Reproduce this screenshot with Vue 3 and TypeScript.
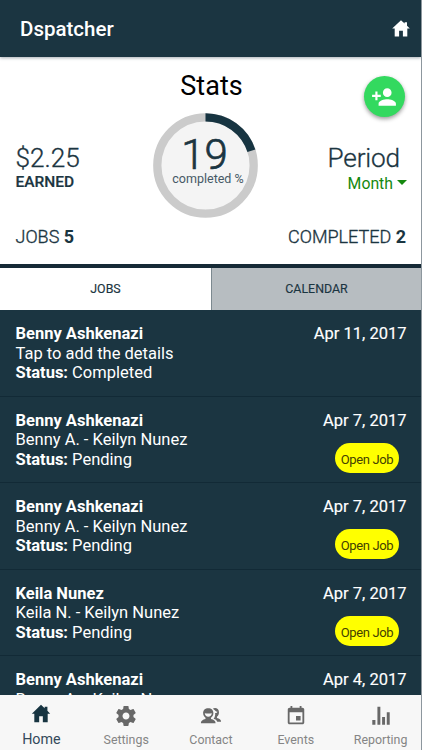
<script setup lang="ts">
interface Job {
  id: number
  name: string
  detail: string
  status: string
  date: string
  open: boolean
}

interface NavItem {
  label: string
  icon: string
  active?: boolean
}

const jobs: Job[] = [
  { id: 1, name: 'Benny Ashkenazi', detail: 'Tap to add the details', status: 'Completed', date: 'Apr 11, 2017', open: false },
  { id: 2, name: 'Benny Ashkenazi', detail: 'Benny A. - Keilyn Nunez', status: 'Pending', date: 'Apr 7, 2017', open: true },
  { id: 3, name: 'Benny Ashkenazi', detail: 'Benny A. - Keilyn Nunez', status: 'Pending', date: 'Apr 7, 2017', open: true },
  { id: 4, name: 'Keila Nunez', detail: 'Keila N. - Keilyn Nunez', status: 'Pending', date: 'Apr 7, 2017', open: true },
  { id: 5, name: 'Benny Ashkenazi', detail: 'Benny A. - Keilyn Nunez', status: 'Pending', date: 'Apr 4, 2017', open: false },
]

const nav: NavItem[] = [
  { label: 'Home', icon: 'home', active: true },
  { label: 'Settings', icon: 'gear' },
  { label: 'Contact', icon: 'people' },
  { label: 'Events', icon: 'calendar' },
  { label: 'Reporting', icon: 'chart' },
]

const percent = 19
const radius = 48.2
const circumference = 2 * Math.PI * radius
const dash = `${(circumference * 20) / 100} ${circumference}`
</script>

<template>
  <div class="screen">
    <header class="topbar">
      <h1>Dspatcher</h1>
      <svg class="top-home" viewBox="0 0 18 17"><path d="M9 0.3 L12.6 3.5 V2.3 H15 V5.7 L17.8 8.4 H15.3 V16.5 H10.9 V10.8 H7.1 V16.5 H2.7 V8.4 H0.2 Z" /></svg>
    </header>

    <section class="stats">
      <div class="side">
        <div class="amount">$2.25</div>
        <div class="earned">EARNED</div>
        <div class="count">JOBS <b>5</b></div>
      </div>
      <div class="middle">
        <h2>Stats</h2>
        <div class="gauge">
          <svg viewBox="0 0 105 105">
            <circle class="track" cx="52.5" cy="52.5" :r="radius" />
            <circle class="arc" cx="52.5" cy="52.5" :r="radius" :stroke-dasharray="dash" transform="rotate(-90 52.5 52.5)" />
          </svg>
          <div class="gauge-text">
            <div class="percent">{{ percent }}</div>
            <div class="caption">completed %</div>
          </div>
        </div>
      </div>
      <div class="side right">
        <button class="add" aria-label="Add contact">
          <svg viewBox="0 0 24 24"><path d="M15 12c2.21 0 4-1.79 4-4s-1.79-4-4-4-4 1.790-4 4 1.790 4 4 4zm-9-2V7H4v3H1v2h3v3h2v-3h3v-2H6zm9 4c-2.670 0-8 1.340-8 4v2h16v-2c0-2.660-5.330-4-8-4z" /></svg>
        </button>
        <div class="period">Period</div>
        <div class="month">Month<i class="caret"></i></div>
        <div class="count">COMPLETED <b>2</b></div>
      </div>
    </section>

    <nav class="tabs">
      <div class="tab selected">JOBS</div>
      <div class="tab">CALENDAR</div>
    </nav>

    <main class="list">
      <article v-for="job in jobs" :key="job.id" class="job">
        <div class="info">
          <div class="name">{{ job.name }}</div>
          <div class="detail">{{ job.detail }}</div>
          <div class="status"><b>Status:</b> {{ job.status }}</div>
        </div>
        <div class="meta">
          <div class="date">{{ job.date }}</div>
          <button v-if="job.open" class="open">Open Job</button>
        </div>
      </article>
    </main>

    <footer class="bottom">
      <div v-for="item in nav" :key="item.label" class="item" :class="{ active: item.active }">
        <svg v-if="item.icon === 'home'" viewBox="0 0 24 24"><path d="M12 2 L16 5.700 V4.200 H19 V8.500 L22 11.800 H19.300 V21 H14 V14.500 H10 V21 H4.700 V11.800 H2 Z" /></svg>
        <svg v-else-if="item.icon === 'gear'" viewBox="1 1 22 22"><path d="M19.430 12.980c.040-.320.070-.640.070-.980s-.030-.660-.070-.980l2.110-1.650c.190-.150.240-.420.120-.640l-2-3.460c-.120-.220-.390-.300-.610-.220l-2.490 1c-.520-.400-1.080-.730-1.690-.980l-.380-2.650C14.460 2.180 14.250 2 14 2h-4c-.250 0-.460.180-.490.420l-.380 2.650c-.610.250-1.170.590-1.690.980l-2.490-1c-.230-.090-.490 0-.610.220l-2 3.460c-.130.220-.070.490.120.640l2.110 1.650c-.040.320-.070.650-.070.980s.030.660.070.980l-2.110 1.650c-.190.150-.240.420-.120.640l2 3.460c.120.220.390.300.610.220l2.490-1c.520.400 1.080.730 1.690.980l.380 2.650c.030.240.240.420.490.420h4c.250 0 .460-.180.490-.420l.380-2.650c.610-.250 1.170-.590 1.690-.980l2.490 1c.230.090.490 0 .610-.220l2-3.460c.120-.220.070-.490-.120-.640l-2.110-1.650zM12 15.500c-1.930 0-3.500-1.570-3.500-3.500s1.570-3.500 3.500-3.500 3.500 1.570 3.500 3.500-1.570 3.500-3.500 3.500z" /></svg>
        <svg v-else-if="item.icon === 'people'" viewBox="0 0 24 24">
          <path d="M14 4 C16 2.300 20.700 3.200 20.700 7.800 C20.700 10.400 19.800 11.800 18.500 12.700 V14.100 C21 14.900 23 15.600 23 18.200 H18.800 C18.300 16.500 16.800 15.700 14.800 15 C16 13.400 16.900 11.200 16.500 8.600 C17.500 8.800 18.800 8.300 19.100 7.300 C17.500 7.700 16.500 5.600 14 4 Z" />
          <path fill-rule="evenodd" d="M9 3.500 C12.500 3.500 14.600 5.700 14.600 8.800 C14.600 11.200 13.600 12.800 12 13.900 V15.200 C14.900 16 17 16.800 17 20 H1 C1 16.800 3.100 16 6 15.200 V13.900 C4.400 12.800 3.400 11.200 3.400 8.800 C3.400 5.700 5.500 3.500 9 3.500 Z M5.200 8.900 C5.500 11.200 6.900 12.700 9 12.700 C11.200 12.700 12.600 11.200 12.900 8.900 C10.200 9.500 8 9.500 5.200 8.900 Z" />
        </svg>
        <svg v-else-if="item.icon === 'calendar'" viewBox="0 0 24 24"><path d="M17 12h-5v5h5v-5zM16 1v2H8V1H6v2H5c-1.110 0-1.990.900-1.990 2L3 19c0 1.100.890 2 2 2h14c1.100 0 2-.900 2-2V5c0-1.100-.900-2-2-2h-1V1h-2zm3 18H5V8h14v11z" /></svg>
        <svg v-else viewBox="0 0 24 24"><path d="M2.500 16.300h3.400V21.500H2.500zM8.100 2h3.200v19.500H8.100zM13.200 13.200h3.200v8.300h-3.200zM18.300 8h3.200v13.500h-3.200z" /></svg>
        <span>{{ item.label }}</span>
      </div>
    </footer>
  </div>
</template>

<style>
body {
  background: #8d979e;
}
</style>

<style scoped>
.screen {
  width: 421px;
  height: 750px;
  display: flex;
  flex-direction: column;
  overflow: hidden;
  background: #fff;
  color: #1b3541;
  font-family: Roboto, "Liberation Sans", sans-serif;
}
h1, h2 { margin: 0; }
button { border: 0; padding: 0; font: inherit; }
.topbar {
  height: 57px;
  flex: none;
  box-sizing: border-box;
  padding: 0 11px 0 20px;
  display: flex;
  align-items: center;
  justify-content: space-between;
  background: #1b3541;
  color: #fff;
  box-shadow: 0 1px 3px #25354566;
  z-index: 1;
}
h1 { font-size: 20.5px; font-weight: 500; line-height: 24px; }
.top-home { width: 18px; height: 17px; fill: #fff; }
.stats {
  height: 207px;
  flex: none;
  display: grid;
  grid-template-columns: 1fr 105px 1fr;
  padding: 0 15px;
}
.side { padding-top: 85px; white-space: nowrap; }
.amount, .period {
  font-size: 26.2px;
  line-height: 32px;
  font-weight: 300;
  -webkit-text-stroke: 0.3px currentColor;
}
.period { letter-spacing: -0.15px; }
.earned { font-size: 15.5px; font-weight: 500; line-height: 18px; margin-top: -1px; -webkit-text-stroke: 0.2px currentColor; }
.count { font-size: 18px; line-height: 22px; margin-top: 35px; font-weight: 300; -webkit-text-stroke: 0.35px currentColor; }
.side:not(.right) { padding-left: 0.5px; }
.count b { font-weight: 700; -webkit-text-stroke: 0; }
.middle { padding-top: 13px; }
h2 { font-size: 27px; line-height: 32px; font-weight: 400; text-align: center; color: #000; margin-left: 2px; }
.gauge { width: 105px; height: 105px; margin-top: 10.5px; display: grid; margin-left: -5px; }
.gauge > * { grid-area: 1 / 1; }
.gauge svg { width: 105px; height: 105px; }
.track { fill: #f4f4f4; stroke: #cbcbcb; stroke-width: 8.3; }
.arc { fill: none; stroke: #173441; stroke-width: 8.3; }
.gauge-text { text-align: center; padding-top: 22.5px; }
.percent { font-size: 42px; line-height: 40px; font-weight: 300; margin-left: -2px; -webkit-text-stroke: 0.7px currentColor; }
.caption { font-size: 12.5px; line-height: 14px; margin: -3px 0 0 5px; white-space: nowrap; color: #465966; }
.right { display: flex; flex-direction: column; align-items: flex-end; padding-top: 19px; }
.add {
  width: 41px;
  height: 41px;
  margin-right: 1px;
  border-radius: 50%;
  background: #33d95f;
  box-shadow: 0 2px 4px #0006;
  display: grid;
  place-items: center;
  flex: none;
}
.add svg { width: 26px; height: 26px; fill: #fff; margin-left: -2px; }
.period { margin: 25px 6px 0 0; }
.month { display: flex; font-size: 15.8px; line-height: 20px; color: #15890f; }
.caret { flex: none; width: 0; height: 0; border: 5px solid transparent; border-top-color: #15890f; border-bottom: 0; margin: 6px -1px 0 4px; }
.right .count { margin-top: 32px; }
.tabs {
  height: 46px;
  flex: none;
  box-sizing: border-box;
  display: grid;
  grid-template-columns: 211px 1fr;
  border-top: 4px solid #162a36;
}
.tab {
  display: grid;
  place-items: center;
  padding-bottom: 2px;
  background: #b7bdc1;
  font-size: 12.4px;
  border-left: 1px solid #7c8990;
  -webkit-text-stroke: 0.15px currentColor;
}
.tab.selected { background: #fff; border-left: 0; }
.list { flex: 1; overflow: hidden; background: #1b3541; color: #fff; }
.job {
  height: 86.5px;
  box-sizing: border-box;
  padding: 14.4px 14.5px 0 15.5px;
  display: flex;
  justify-content: space-between;
  border-bottom: 1px solid #122a36;
  font-size: 16.5px;
  line-height: 19.4px;
}
.name, .status b { font-weight: 700; }
.meta { display: flex; flex-direction: column; align-items: flex-end; }
.date { -webkit-text-stroke: 0.15px currentColor; }
.open {
  width: 64px;
  height: 30px;
  margin: 12.6px 7.5px 0 0;
  border-radius: 15px;
  background: #ff0;
  color: #443f00;
  font-size: 13px;
  letter-spacing: -0.35px;
  padding-top: 3px;
  white-space: nowrap;
}
.bottom {
  height: 55px;
  flex: none;
  display: grid;
  grid-template-columns: repeat(5, 84.8px);
  margin-left: -1px;
  background: #f7f7f7;
  color: #858585;
}
.item { display: flex; flex-direction: column; align-items: center; padding-top: 10px; font-size: 12.4px; }
.item svg { width: 22px; height: 22px; fill: #686868; }
.item span { line-height: 14px; margin-top: 6px; }
.item.active { font-size: 14.3px; color: #34495a; padding-top: 8px; }
.item.active svg { fill: #173441; }
.item.active span { margin-top: 7px; }
</style>
